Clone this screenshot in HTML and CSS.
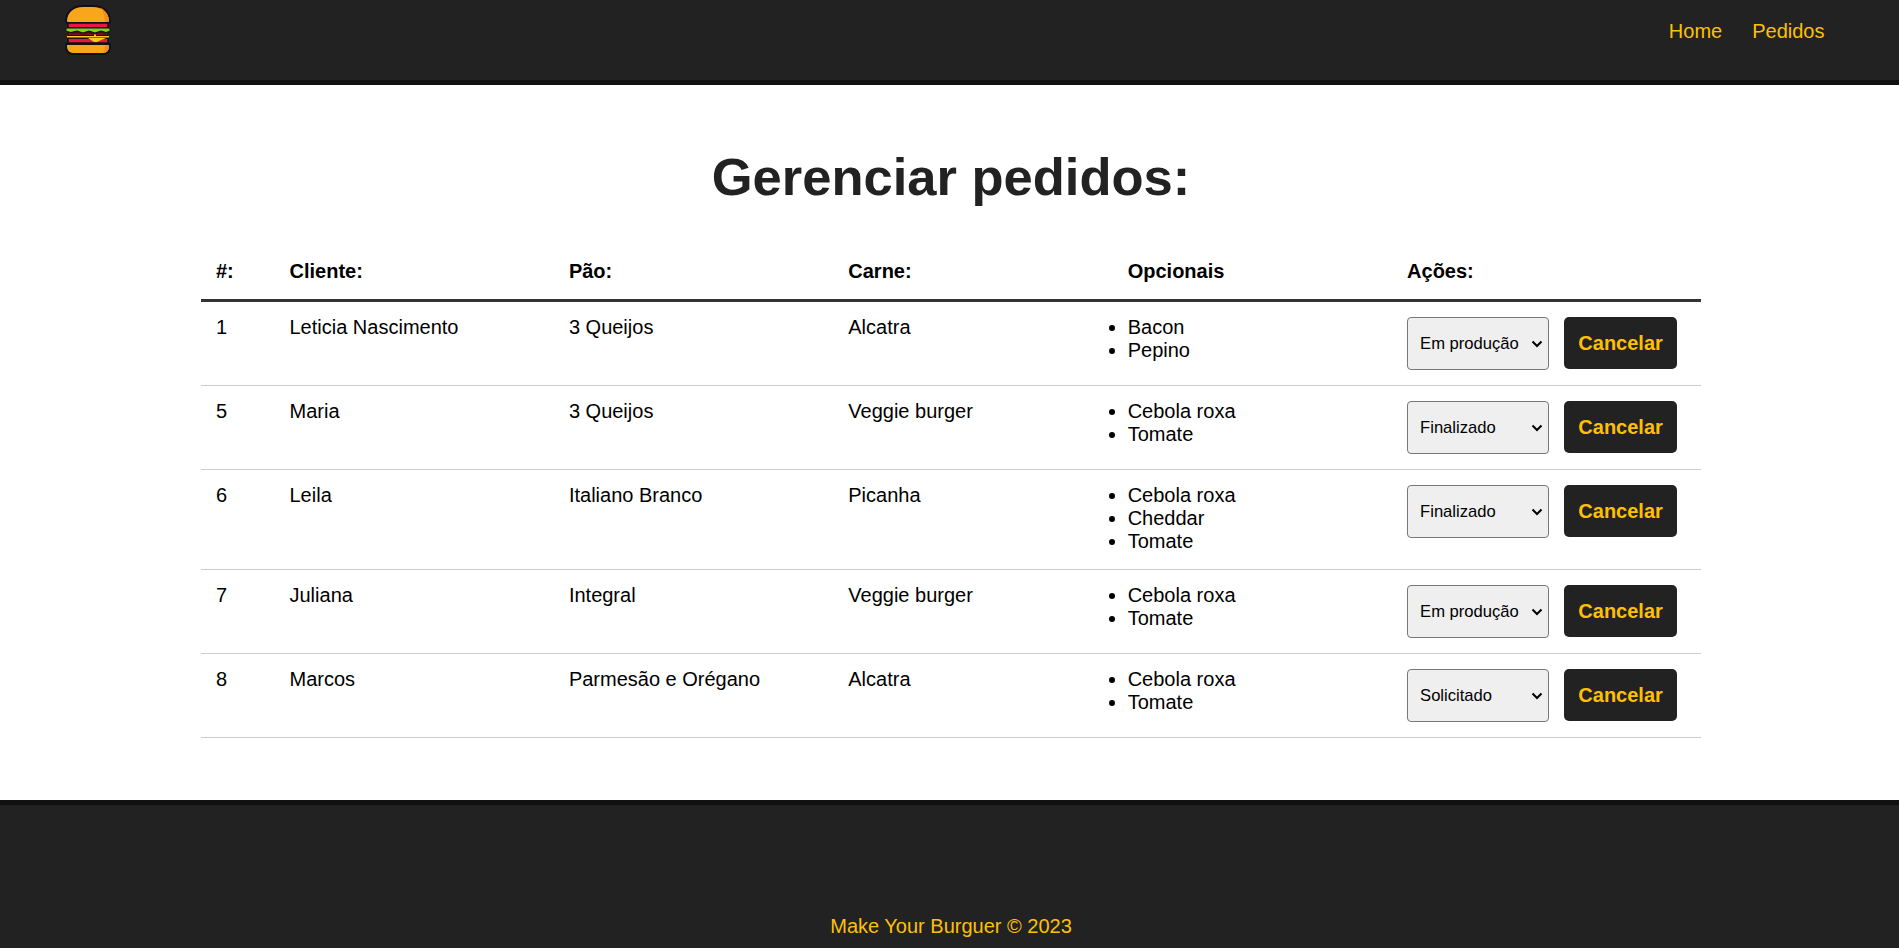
FILE: index.html
```html
<!DOCTYPE html>
<html lang="pt-BR">
<head>
<meta charset="utf-8">
<title>Make Your Burguer</title>
<link rel="stylesheet" href="styles.css">
</head>
<body>
<nav class="navbar">
  <a class="logo" href="#">
    <svg viewBox="0 0 50 54" width="50" height="54">
      <path d="M3 18 C3 9 10 3 20 3 H30 C40 3 47 9 47 18 C47 19.500 46 20 45 20 H5 C4 20 3 19.500 3 18 Z" fill="#faa61a" stroke="#111" stroke-width="2"/>
      <path d="M37 4.500 C42 7 46 12 46 18 C46 18.700 45.500 19 45 19 H42 C42 13 40 8 37 4.500 Z" fill="#f58a1f"/>
      <rect x="5" y="20" width="40" height="5" fill="#e8173f" stroke="#111" stroke-width="1.500"/>
      <rect x="5" y="29" width="40" height="3.500" fill="#7a1020" stroke="#111" stroke-width="1"/>
      <path d="M4 25 H46 Q47 25 47 26 V27.500 Q47 28.500 46 28.500 L43 29.500 L38 28 L32 30 L26 28 L20 30 L14 28 L8 29.500 L4 28.500 Q3 28.500 3 27.500 V26 Q3 25 4 25 Z" fill="#7ed321" stroke="#111" stroke-width="1"/>
      <path d="M8 31 L14 29.500 L20 31 L26 29.500 L32 31 L38 29.500 L43 31" fill="none" stroke="#4a0a14" stroke-width="1"/>
      <rect x="5" y="35" width="40" height="5" fill="#e8173f" stroke="#111" stroke-width="1.500"/>
      <rect x="3.500" y="32.500" width="43" height="2.500" rx="1" fill="#fbc81f" stroke="#111" stroke-width="1"/>
      <path d="M25 35 H43 L37 37.500 L34 39 H31 L28 37 Z" fill="#fbc81f"/>
      <path d="M31 31.500 h2 v2 h-2 Z" fill="#fbc81f"/>
      <path d="M3 41 H47 V44 C47 48 44 51 40 51 H10 C6 51 3 48 3 44 Z" fill="#faa61a" stroke="#111" stroke-width="2"/>
      <path d="M42 42 H46 V44 C46 47 44 49.500 41 50 C42 47 42 45 42 42 Z" fill="#f58a1f"/>
    </svg>
  </a>
  <div class="nav-links">
    <a href="#">Home</a>
    <a href="#">Pedidos</a>
  </div>
</nav>

<main class="content">
  <h1 class="title">Gerenciar pedidos:</h1>
  <table class="orders">
    <colgroup>
      <col class="col-id"><col class="col-text"><col class="col-text"><col class="col-text"><col class="col-text"><col>
    </colgroup>
    <thead>
      <tr><th>#:</th><th>Cliente:</th><th>Pão:</th><th>Carne:</th><th>Opcionais</th><th>Ações:</th></tr>
    </thead>
    <tbody>
      <tr>
        <td>1</td><td>Leticia Nascimento</td><td>3 Queijos</td><td>Alcatra</td>
        <td><ul><li>Bacon</li><li>Pepino</li></ul></td>
        <td><div class="actions">
          <select><option>Solicitado</option><option selected>Em produção</option><option>Finalizado</option></select>
          <button class="cancel">Cancelar</button>
        </div></td>
      </tr>
      <tr>
        <td>5</td><td>Maria</td><td>3 Queijos</td><td>Veggie burger</td>
        <td><ul><li>Cebola roxa</li><li>Tomate</li></ul></td>
        <td><div class="actions">
          <select><option>Solicitado</option><option>Em produção</option><option selected>Finalizado</option></select>
          <button class="cancel">Cancelar</button>
        </div></td>
      </tr>
      <tr>
        <td>6</td><td>Leila</td><td>Italiano Branco</td><td>Picanha</td>
        <td><ul><li>Cebola roxa</li><li>Cheddar</li><li>Tomate</li></ul></td>
        <td><div class="actions">
          <select><option>Solicitado</option><option>Em produção</option><option selected>Finalizado</option></select>
          <button class="cancel">Cancelar</button>
        </div></td>
      </tr>
      <tr>
        <td>7</td><td>Juliana</td><td>Integral</td><td>Veggie burger</td>
        <td><ul><li>Cebola roxa</li><li>Tomate</li></ul></td>
        <td><div class="actions">
          <select><option>Solicitado</option><option selected>Em produção</option><option>Finalizado</option></select>
          <button class="cancel">Cancelar</button>
        </div></td>
      </tr>
      <tr>
        <td>8</td><td>Marcos</td><td>Parmesão e Orégano</td><td>Alcatra</td>
        <td><ul><li>Cebola roxa</li><li>Tomate</li></ul></td>
        <td><div class="actions">
          <select><option selected>Solicitado</option><option>Em produção</option><option>Finalizado</option></select>
          <button class="cancel">Cancelar</button>
        </div></td>
      </tr>
    </tbody>
  </table>
</main>

<footer class="footer">
  <p>Make Your Burguer &copy; 2023</p>
</footer>
</body>
</html>
```

FILE: styles.css
```css
* { box-sizing: border-box; margin: 0; padding: 0; }

html, body { height: 100%; overflow: hidden; }

body {
  font-family: "Liberation Sans", Arial, sans-serif;
  font-size: 20px;
  color: #000;
  background: #fff;
}

.navbar {
  display: flex;
  justify-content: space-between;
  align-items: flex-start;
  height: 85px;
  padding: 3px 74.500px 0 63px;
  background: #222;
  border-bottom: 5px solid #111;
}

.logo { display: block; }
.logo svg { display: block; }

.nav-links {
  display: flex;
  gap: 30px;
  padding-top: 17px;
}

.nav-links a {
  color: #fec005;
  text-decoration: none;
}

.content {
  height: 715px;
  padding-top: 61px;
}

.title {
  font-size: 52.500px;
  color: #222;
  text-align: center;
  padding-left: 3px;
  margin-bottom: 38px;
}

.orders {
  width: 1500px;
  margin-left: 201px;
  table-layout: fixed;
  border-collapse: collapse;
}

.col-id { width: 73.500px; }
.col-text { width: 279.400px; }

.orders th {
  padding: 15px 15px 16px;
  text-align: left;
  border-bottom: 3px solid #333;
}

.orders td {
  padding: 14px 15px 16px;
  vertical-align: top;
  border-bottom: 1px solid #ccc;
}

.orders ul { list-style: disc; }

.actions {
  display: flex;
  align-items: flex-start;
  gap: 15px;
  margin: 1px 0 -1px;
}

.actions select {
  appearance: none;
  width: 142px;
  height: 53px;
  padding: 0 24px 0 12px;
  font-family: inherit;
  font-size: 16.600px;
  color: #000;
  background: #efefef url("data:image/svg+xml,%3Csvg xmlns='http://www.w3.org/2000/svg' width='12' height='8'%3E%3Cpath d='M1.500 1.500 L6 6 L10.500 1.500' fill='none' stroke='%23000' stroke-width='2'/%3E%3C/svg%3E") no-repeat right 5px center;
  border: 1px solid #767676;
  border-radius: 4px;
}

.cancel {
  width: 113px;
  height: 52px;
  padding: 0;
  font-family: inherit;
  font-size: 20px;
  font-weight: 700;
  color: #fec005;
  background: #222;
  border: 0;
  border-radius: 5px;
}

.footer {
  height: 148px;
  padding: 110px 0 0 3px;
  text-align: center;
  color: #fec005;
  background: #222;
  border-top: 5px solid #111;
}
```
